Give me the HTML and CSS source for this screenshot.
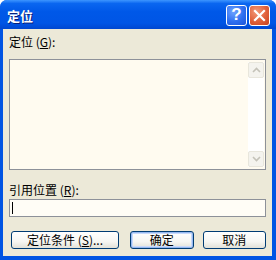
FILE: index.html
```html
<!DOCTYPE html>
<html lang="zh-CN">
<head>
  <meta charset="UTF-8">
  <title>定位</title>
  <link rel="stylesheet" href="styles.css">
</head>
<body>
  <div class="window">
    <div class="titlebar">
      <span class="title">定位</span>
      <div class="caption-btns">
        <span class="cap-btn help">?</span>
        <span class="cap-btn close">
          <svg width="13" height="13" viewBox="0 0 13 13">
            <path d="M2 2 L11 11 M11 2 L2 11" stroke="#fff" stroke-width="2.2" stroke-linecap="square"/>
          </svg>
        </span>
      </div>
    </div>
    <div class="client">
      <div class="label">定位 (<u>G</u>):</div>
      <div class="listbox">
        <div class="list-items"></div>
        <div class="scrollbar">
          <span class="sb-btn">
            <svg width="9" height="6" viewBox="0 0 9 6"><path d="M1 5 L4.5 1.5 L8 5" fill="none" stroke="#c4c2b8" stroke-width="1.6"/></svg>
          </span>
          <span class="sb-track"></span>
          <span class="sb-btn">
            <svg width="9" height="6" viewBox="0 0 9 6"><path d="M1 1 L4.5 4.5 L8 1" fill="none" stroke="#c4c2b8" stroke-width="1.6"/></svg>
          </span>
        </div>
      </div>
      <div class="label label-ref">引用位置 (<u>R</u>):</div>
      <div class="input"><span class="caret"></span></div>
      <div class="buttons">
        <button class="btn btn-wide">定位条件 (<u>S</u>)...</button>
        <button class="btn btn-default">确定</button>
        <button class="btn">取消</button>
      </div>
    </div>
  </div>
</body>
</html>
```

FILE: styles.css
```css
* {
  box-sizing: border-box;
}
body {
  margin: 0;
  background: #fff;
  font-family: 'Noto Sans CJK SC', 'DejaVu Sans', sans-serif;
  font-size: 12px;
  color: #000;
}
.window {
  width: 276px;
  height: 260px;
  background: #0054e3;
  border-radius: 7px 7px 0 0;
  display: flex;
  flex-direction: column;
  padding: 0 4px 4px 3px;
}
.titlebar {
  height: 29px;
  margin: 0 -4px 0 -3px;
  border-radius: 7px 7px 0 0;
  background: linear-gradient(#3d95ff 0%, #0a66f0 12%, #0058e8 40%, #0055e5 80%, #0047d0 100%);
  display: flex;
  align-items: center;
  padding: 0 6px 0 7px;
}
.title {
  color: #fff;
  font-weight: bold;
  font-size: 13px;
  text-shadow: 1px 1px 0 #0a1e78;
  flex: 1;
  margin-top: 1px;
}
.caption-btns {
  display: flex;
  gap: 2px;
  margin-top: 1px;
}
.cap-btn {
  width: 21px;
  height: 21px;
  border: 1px solid #fff;
  border-radius: 3px;
  display: flex;
  align-items: center;
  justify-content: center;
  color: #fff;
  font-family: 'Liberation Sans', sans-serif;
  font-weight: bold;
  font-size: 17px;
}
.help {
  background: radial-gradient(circle at 35% 30%, #6fa4ff 0%, #2f6ff0 55%, #1c54d8 100%);
}
.close {
  background: radial-gradient(circle at 35% 30%, #f39a7a 0%, #e0603a 55%, #c8421d 100%);
}
.client {
  flex: 1;
  background: #ece9d8;
  padding: 7px 6px 0 6px;
  display: flex;
  flex-direction: column;
}
.label {
  line-height: 12px;
  height: 12px;
}
.label u {
  text-decoration: underline;
}
.listbox {
  margin-top: 11px;
  height: 111px;
  border: 1px solid #8d9199;
  background: #fffbf0;
  display: flex;
  padding: 2px 1px 2px 0;
}
.list-items {
  flex: 1;
}
.scrollbar {
  width: 16px;
  display: flex;
  flex-direction: column;
  background: #ffffff;
}
.sb-btn {
  height: 16px;
  border: 1px solid #e8e6dc;
  border-radius: 2px;
  background: #f4f3ee;
  display: flex;
  align-items: center;
  justify-content: center;
}
.sb-track {
  flex: 1;
}
.label-ref {
  margin-top: 14px;
}
.input {
  margin-top: 3px;
  height: 18px;
  border: 1px solid #8d9199;
  background: #fffdf6;
  padding: 2px 2px;
}
.caret {
  display: block;
  width: 1px;
  height: 12px;
  background: #000;
}
.buttons {
  margin-top: 14px;
  display: flex;
  padding-left: 2px;
}
.btn {
  height: 18px;
  font-family: inherit;
  font-size: 12px;
  line-height: 14px;
  padding: 0;
  border: 1px solid #003c74;
  border-radius: 3px;
  background: linear-gradient(#ffffff 0%, #f6f6f2 60%, #e2e1d8 100%);
  color: #000;
  width: 64px;
}
.btn-wide {
  width: 109px;
  margin-right: 11px;
}
.btn-default {
  margin-right: 9px;
  box-shadow: inset 0 0 0 1px #95b8f0, inset 0 0 0 2px #c9dafa;
}
```
